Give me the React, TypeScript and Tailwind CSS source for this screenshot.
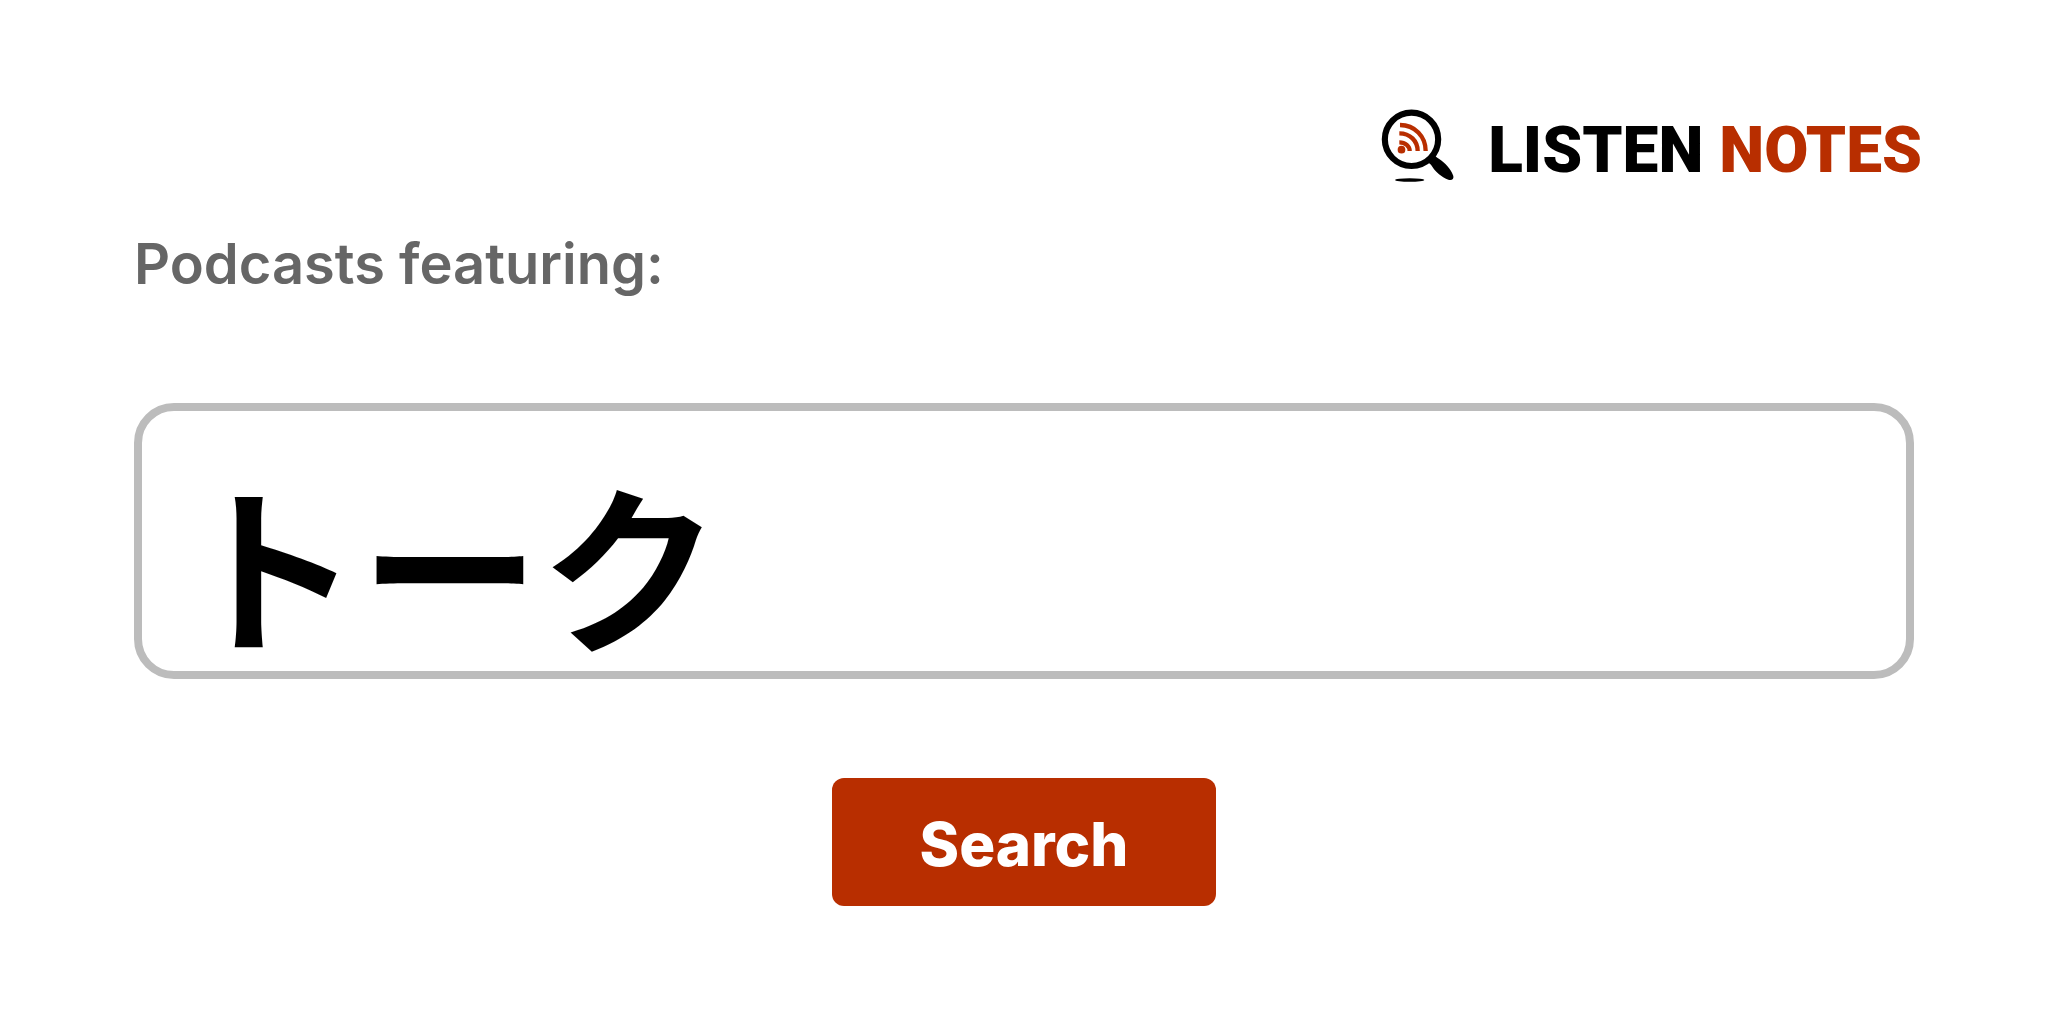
import { useState } from "react";

function LogoMark() {
  return (
    <svg viewBox="36 24 228 228" className="h-[76px] w-[76px]" aria-hidden="true">
      <circle cx="130.500" cy="118" r="80" fill="none" stroke="#000" strokeWidth="18.500" />
      <path
        d="M180 188 L200 166 C204 172 213 176 221 182 C238 195 252 213 256 228 C258 238 251 242 241 239 C222 233 204 217 194 202 C190 195 187 190 180 188 Z"
        fill="#000"
      />
      <ellipse cx="125" cy="240" rx="44" ry="5.500" fill="#000" />
      <circle cx="100.500" cy="149" r="11.500" fill="#b82e00" />
      <g fill="none" stroke="#b82e00" strokeWidth="13">
        <path d="M94 127 C112 127 125 138 125 153" />
        <path d="M94 100 C126 100 149 123 149 153" />
        <path d="M96 75 C140 75 173 109 173 153" />
      </g>
    </svg>
  );
}

export default function App() {
  const [query, setQuery] = useState("トーク");

  return (
    <main className="min-h-screen w-full bg-white px-[134px] pt-[108px] pb-28 font-['Inter',sans-serif]">
      <header className="-mr-2 flex justify-end">
        <a href="/" className="flex items-center gap-8">
          <LogoMark />
          <span className="pt-2.5 font-['Roboto',sans-serif] text-[64px] leading-[64px] font-black whitespace-nowrap">
            LISTEN <span className="text-[#b82e00]">NOTES</span>
          </span>
        </a>
      </header>

      <form onSubmit={(e) => e.preventDefault()} className="mt-12 flex flex-col">
        <label htmlFor="query" className="text-[56px] leading-[64px] font-semibold text-[#666666]">
          Podcasts featuring:
        </label>
        <input
          id="query"
          type="text"
          value={query}
          onChange={(e) => setQuery(e.target.value)}
          className="mt-[107px] h-[276px] w-full rounded-[40px] border-8 border-[#bcbcbc] bg-white px-[38px] pt-[38px] font-['Noto_Sans_CJK_JP',sans-serif] text-[180px] font-bold text-black outline-none"
        />
        <button
          type="submit"
          className="mt-[99px] h-32 w-96 self-center rounded-xl bg-[#b82e00] pt-1 text-[60px] font-extrabold text-white"
        >
          Search
        </button>
      </form>
    </main>
  );
}
